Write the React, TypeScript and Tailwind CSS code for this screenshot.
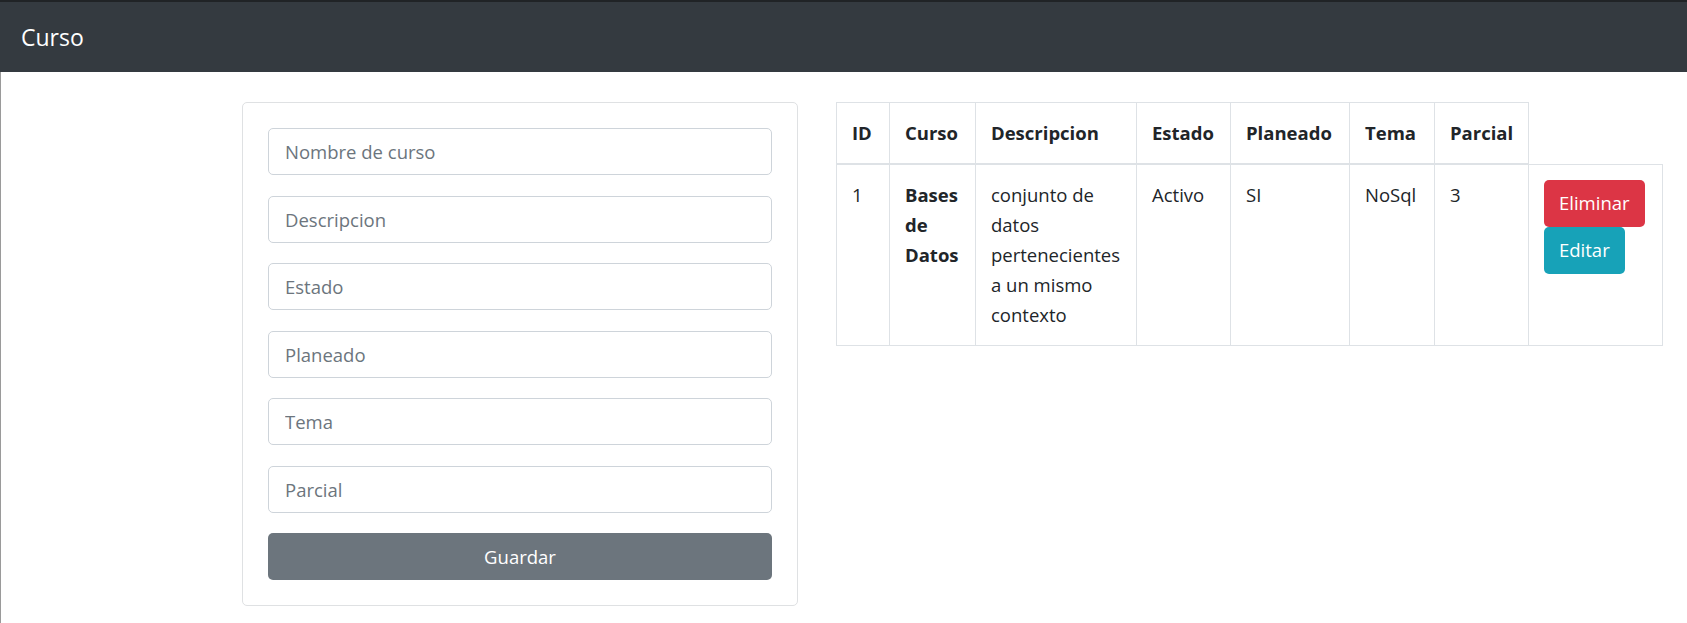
import React from "react";

const fields = ["Nombre de curso", "Descripcion", "Estado", "Planeado", "Tema", "Parcial"];

export default function App() {
  const font = { fontFamily: '"Open Sans", "Noto Sans", sans-serif' };
  return (
    <div className="w-full min-h-[623px] bg-white text-[#212529]" style={font}>
      <div className="h-[2px] bg-[#202326]" />
      <nav className="h-[70px] bg-[#343a40] flex items-center pl-[21px]">
        <span className="text-white text-[23px] leading-none">Curso</span>
      </nav>
      <div className="border-l border-[#9a9a9a] min-h-[551px] flex items-start pl-[241px] pt-[30px] gap-[38px]">
        <div className="w-[556px] h-[504px] shrink-0 border border-[#dfe1e3] rounded-[5px] pl-[25px] pr-[25px] pt-[25px] flex flex-col gap-[20.5px]">
          {fields.map((f) => (
            <input
              key={f}
              placeholder={f}
              className="h-[47px] w-full border border-[#ced4da] rounded-[5px] pl-[16px] text-[18.5px] text-[#495057] placeholder:text-[#6c757d] outline-none bg-white"
            />
          ))}
          <button className="h-[47px] w-full rounded-[5px] bg-[#6c757d] text-white text-[18.5px]">
            Guardar
          </button>
        </div>
        <table className="table-fixed border-collapse text-[18.5px] leading-[30px] w-[826px] shrink-0">
          <colgroup>
            <col className="w-[53px]" />
            <col className="w-[86px]" />
            <col className="w-[161px]" />
            <col className="w-[94px]" />
            <col className="w-[119px]" />
            <col className="w-[85px]" />
            <col className="w-[94px]" />
            <col className="w-[134px]" />
          </colgroup>
          <thead>
            <tr>
              {["ID", "Curso", "Descripcion", "Estado", "Planeado", "Tema", "Parcial"].map((h) => (
                <th
                  key={h}
                  className="border border-[#dee2e6] border-b-2 px-[15px] py-[15px] text-left font-bold align-bottom"
                >
                  {h}
                </th>
              ))}
            </tr>
          </thead>
          <tbody>
            <tr>
              <td className="border border-[#dee2e6] p-[15px] align-top">1</td>
              <th className="border border-[#dee2e6] p-[15px] align-top text-left font-bold">Bases de Datos</th>
              <td className="border border-[#dee2e6] p-[15px] align-top">conjunto de datos pertenecientes a un mismo contexto</td>
              <td className="border border-[#dee2e6] p-[15px] align-top">Activo</td>
              <td className="border border-[#dee2e6] p-[15px] align-top">SI</td>
              <td className="border border-[#dee2e6] p-[15px] align-top">NoSql</td>
              <td className="border border-[#dee2e6] p-[15px] align-top">3</td>
              <td className="border border-[#dee2e6] p-[15px] align-top">
                <div className="flex flex-col items-start">
                  <button className="h-[47px] px-[15px] rounded-[5px] bg-[#dc3545] text-white text-[18.5px]">Eliminar</button>
                  <button className="h-[47px] px-[15px] rounded-[5px] bg-[#17a2b8] text-white text-[18.5px]">Editar</button>
                </div>
              </td>
            </tr>
          </tbody>
        </table>
      </div>
    </div>
  );
}
